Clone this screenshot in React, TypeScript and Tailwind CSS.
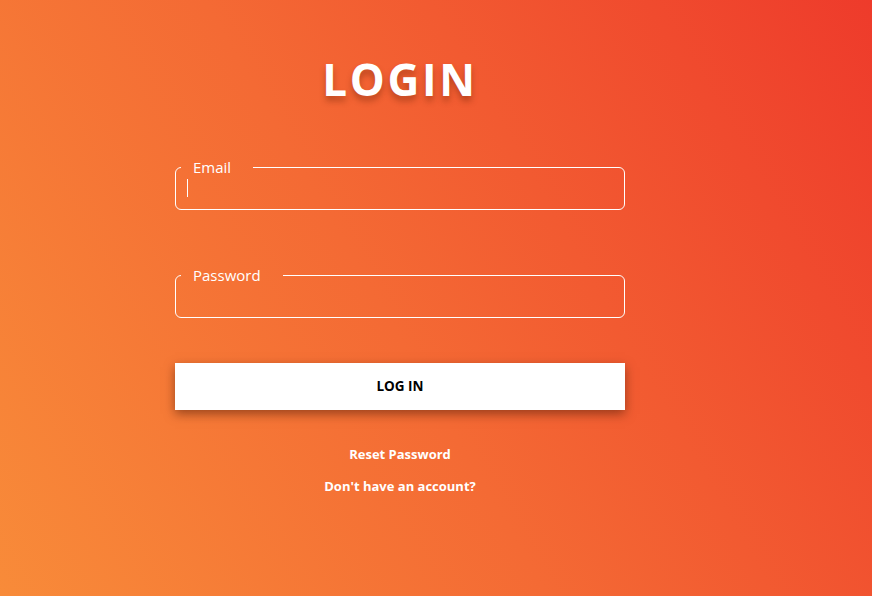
import React from "react";

function Field({ label, type, caret }: { label: string; type: string; caret?: boolean }) {
  return (
    <fieldset className="relative w-full rounded-[6px] border border-white px-[5px]">
      <legend className="pl-[12px] pr-[22px] text-[15px] leading-[20px] text-white">{label}</legend>
      <input
        type={type}
        className="block h-[32px] w-full bg-transparent px-[6px] text-[15px] text-white outline-none"
      />
      {caret && <span className="absolute left-[11px] top-[2px] h-[18px] w-px bg-white" />}
    </fieldset>
  );
}

export default function App() {
  return (
    <div
      className="min-h-[596px] w-full bg-[linear-gradient(60deg,#f88b39_0%,#f46a34_45%,#ee3b2b_100%)]"
      style={{ fontFamily: '"Open Sans", "Noto Sans", sans-serif' }}
    >
      <div className="ml-[175px] flex w-[450px] flex-col items-center pt-[51px]">
        <h1 className="text-[44px] font-bold leading-[56px] tracking-[0.06em] text-white [text-shadow:0_5px_6px_rgba(120,40,10,0.45)]">
          LOGIN
        </h1>

        <div className="mt-[50px] flex w-full flex-col gap-[55px]">
          <Field label="Email" type="email" caret />
          <Field label="Password" type="password" />
        </div>

        <button className="mt-[45px] h-[47px] w-full bg-white text-[13.5px] font-bold text-black shadow-[0_4px_10px_rgba(80,30,10,0.55)]">
          LOG IN
        </button>

        <a className="mt-[35px] text-[13px] font-bold text-white">Reset Password</a>
        <a className="mt-[12px] text-[13px] font-bold text-white">Don't have an account?</a>
      </div>
    </div>
  );
}
